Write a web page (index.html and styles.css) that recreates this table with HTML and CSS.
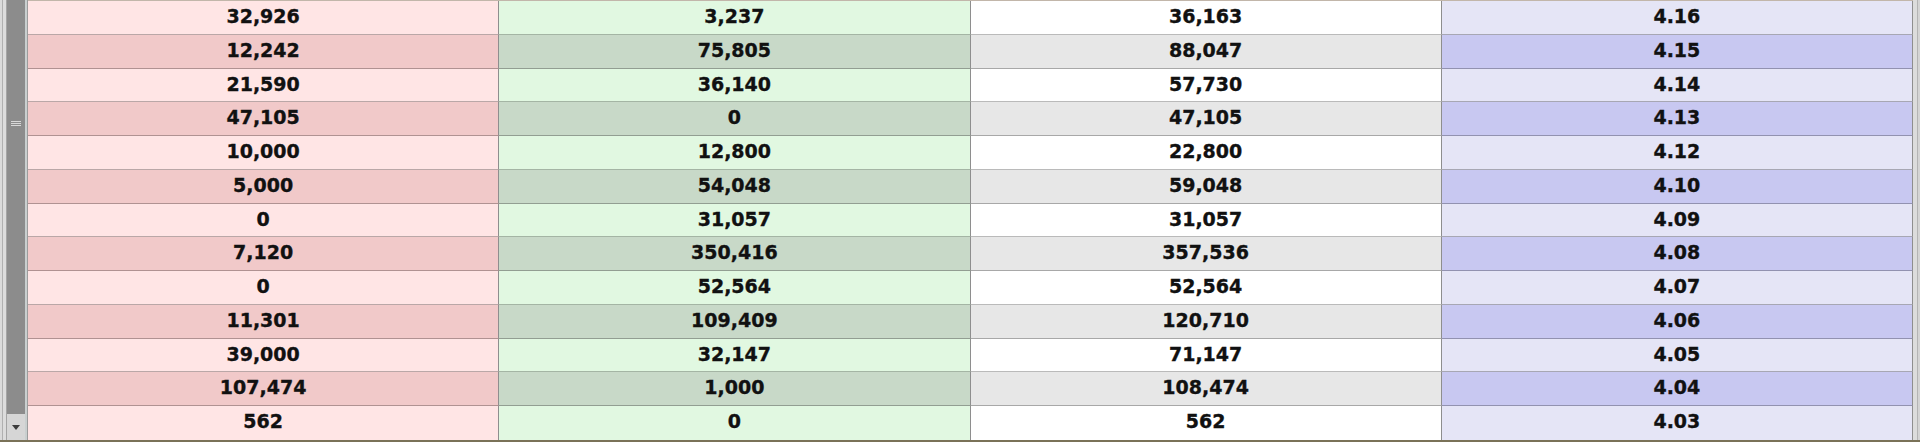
FILE: index.html
```html
<!DOCTYPE html>
<html>
<head>
<meta charset="utf-8">
<link rel="stylesheet" href="styles.css">
</head>
<body>
<div class="frame">
  <div class="main">
    <div class="vscroll">
      <div class="thumb"><div class="grip"><span></span><span></span><span></span></div></div>
      <div class="btn-down"><span class="arrow"></span></div>
    </div>
    <div class="grid">
      <div class="row"><div class="c c1">32,926</div><div class="c c2">3,237</div><div class="c c3">36,163</div><div class="c c4">4.16</div></div>
      <div class="row alt"><div class="c c1">12,242</div><div class="c c2">75,805</div><div class="c c3">88,047</div><div class="c c4">4.15</div></div>
      <div class="row"><div class="c c1">21,590</div><div class="c c2">36,140</div><div class="c c3">57,730</div><div class="c c4">4.14</div></div>
      <div class="row alt"><div class="c c1">47,105</div><div class="c c2">0</div><div class="c c3">47,105</div><div class="c c4">4.13</div></div>
      <div class="row"><div class="c c1">10,000</div><div class="c c2">12,800</div><div class="c c3">22,800</div><div class="c c4">4.12</div></div>
      <div class="row alt"><div class="c c1">5,000</div><div class="c c2">54,048</div><div class="c c3">59,048</div><div class="c c4">4.10</div></div>
      <div class="row"><div class="c c1">0</div><div class="c c2">31,057</div><div class="c c3">31,057</div><div class="c c4">4.09</div></div>
      <div class="row alt"><div class="c c1">7,120</div><div class="c c2">350,416</div><div class="c c3">357,536</div><div class="c c4">4.08</div></div>
      <div class="row"><div class="c c1">0</div><div class="c c2">52,564</div><div class="c c3">52,564</div><div class="c c4">4.07</div></div>
      <div class="row alt"><div class="c c1">11,301</div><div class="c c2">109,409</div><div class="c c3">120,710</div><div class="c c4">4.06</div></div>
      <div class="row"><div class="c c1">39,000</div><div class="c c2">32,147</div><div class="c c3">71,147</div><div class="c c4">4.05</div></div>
      <div class="row alt"><div class="c c1">107,474</div><div class="c c2">1,000</div><div class="c c3">108,474</div><div class="c c4">4.04</div></div>
      <div class="row last"><div class="c c1">562</div><div class="c c2">0</div><div class="c c3">562</div><div class="c c4">4.03</div></div>
    </div>
    <div class="redge"></div>
  </div>
  <div class="bottomline"></div>
</div>
</body>
</html>
```

FILE: styles.css
```css
html, body {
  margin: 0;
  padding: 0;
  background: #d4d4d4;
}

.frame {
  width: 1920px;
  height: 442px;
  display: flex;
  flex-direction: column;
  overflow: hidden;
}

.main {
  height: 440px;
  display: flex;
}

.vscroll {
  width: 28px;
  flex: none;
  box-sizing: border-box;
  padding: 0 3px 0 7px;
  display: flex;
  flex-direction: column;
  background:
    linear-gradient(to right,
      #dadada 0, #dadada 2px,
      #b0b0b0 2px, #b0b0b0 3px,
      #dcdcdc 3px, #dcdcdc 6px,
      #a4a4a4 6px, #a4a4a4 7px,
      transparent 7px, transparent 25px,
      #c9cfcf 25px, #c9cfcf 27px,
      #9c9c9c 27px, #9c9c9c 28px);
}

.thumb {
  flex: 1;
  background: #8c8c8c;
  box-sizing: border-box;
  padding-top: 121px;
}

.grip {
  width: 10px;
  margin: 0 auto;
  display: flex;
  flex-direction: column;
  gap: 1px;
}

.grip span {
  display: block;
  height: 1px;
  background: #d8d8d8;
}

.btn-down {
  height: 26px;
  flex: none;
  background: #d6d6d6;
  display: flex;
  align-items: center;
  justify-content: center;
}

.arrow {
  width: 0;
  height: 0;
  border-top: 5px solid #3c3c3c;
  border-left: 4px solid transparent;
  border-right: 4px solid transparent;
}

.grid {
  flex: 1;
  display: grid;
  grid-template-rows: repeat(13, 1fr);
  border-top: 1px solid #c2b6aa;
  box-sizing: border-box;
  height: 440px;
}

.row {
  display: grid;
  grid-template-columns: repeat(4, 1fr);
}

.c {
  font-family: "DejaVu Sans", "Liberation Sans", sans-serif;
  font-weight: bold;
  font-size: 19px;
  line-height: 20px;
  color: #111111;
  -webkit-text-stroke: 0.35px #111111;
  text-align: center;
  padding-top: 5px;
  box-sizing: border-box;
  border-right: 1px solid #8e8e8e;
  border-bottom: 1px solid rgba(0, 0, 0, 0.27);
}

.row.last .c {
  border-bottom: none;
}

.c1 { background: #ffe5e5; }
.c2 { background: #e1f8e1; }
.c3 { background: #ffffff; }
.c4 { background: #e5e5f6; }

.row.alt .c1 { background: #f1c9c9; }
.row.alt .c2 { background: #c8d9c8; }
.row.alt .c3 { background: #e7e7e7; }
.row.alt .c4 { background: #c8c8f1; }

.redge {
  width: 7px;
  flex: none;
  background: linear-gradient(to right, #dcdcdc 0, #dcdcdc 4px, #b4b4b4 4px, #b4b4b4 5px, #d4d4d4 5px);
}

.bottomline {
  height: 2px;
  background: #7a7258;
}
```
